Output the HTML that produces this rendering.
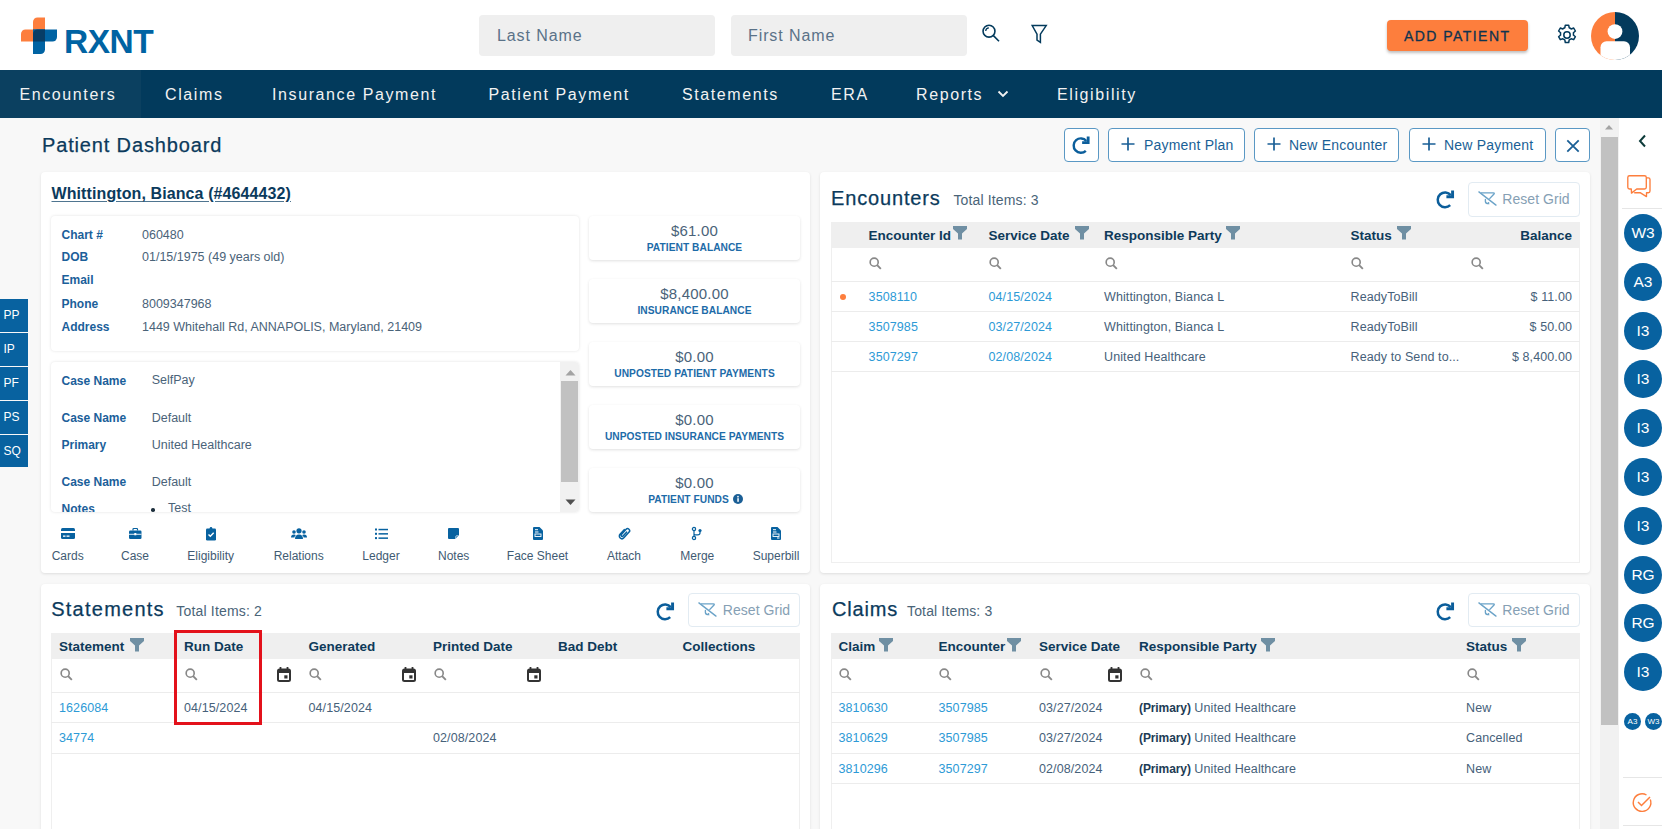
<!DOCTYPE html>
<html><head><meta charset="utf-8">
<style>
*{box-sizing:border-box}
html,body{margin:0;padding:0}
body{width:1662px;height:829px;overflow:hidden;position:relative;background:#f8f8f8;font-family:"Liberation Sans",sans-serif;color:#3f5b73}
.a{position:absolute}
.t{position:absolute;white-space:nowrap;line-height:1}
svg{position:absolute;overflow:visible}
#hdr{left:0;top:0;width:1662px;height:70px;background:#fff}
#nav{left:0;top:70px;width:1662px;height:48px;background:#023a5c}
.nv{color:#f2f2f2;font-size:16px;letter-spacing:1.6px;top:87px}
.inp{background:#efefef;border-radius:4px;height:41px;top:15px;width:236px}
.ph{font-size:16px;color:#5a7288;letter-spacing:0.9px;top:28px}
.card{background:#fff;border-radius:4px;box-shadow:0 1px 3px rgba(0,0,0,0.11)}
.btn{border:1px solid #5a98c4;border-radius:4px;background:#fff;top:128px;height:34px}
.btxt{font-size:14px;color:#1a5f96;top:138px;letter-spacing:0.2px}
.lbl{font-size:12px;font-weight:bold;color:#1b609a}
.val{font-size:12.5px;color:#4a6379}
.bal{left:589px;width:211px;height:44px}
.amt{font-size:15px;color:#4a6379;width:211px;text-align:center;left:0;top:7.5px;letter-spacing:0.2px}
.blab{font-size:10.2px;font-weight:bold;color:#1d6ba8;width:211px;text-align:center;left:0;top:27.2px;letter-spacing:0.05px}
.ttl{font-size:20px;color:#0b3a5c;letter-spacing:0.85px;-webkit-text-stroke:0.25px #0b3a5c}
.tot{font-size:14px;color:#4a6478}
.gh{background:#efefef;height:26px}
.ght{font-size:13.5px;font-weight:bold;color:#0e3a5a}
.cell{font-size:12.5px;color:#46617a;letter-spacing:0.1px}
.lnk{font-size:12.5px;color:#2d9ad6;letter-spacing:0.1px}
.rline{height:1px;background:#ececec}
.rg{border:1px solid #e2ebf2;border-radius:4px;background:#fff;height:34.5px;width:112px}
.rgt{font-size:14px;color:#86a0b4;top:9.3px;left:33.8px;letter-spacing:0.05px}
.ic{font-size:12px;color:#3f5b73;top:549.5px}
.tab{left:0;width:28px;background:#0862a0;color:#fff;font-size:12px}
.circ{width:38px;height:38px;border-radius:50%;background:#0862a0;color:#fff;font-size:15.5px;text-align:center;line-height:38px;left:1624px;margin-top:0.3px}
</style></head><body>

<!-- HEADER -->
<div id="hdr" class="a">
  <!-- logo -->
  <svg style="left:0;top:0" width="160" height="70">
    <path d="M33,41.5 V22 a4.5,4.5 0 0 1 4.5,-4.5 H45 V41.5 Z" fill="#fd7e3d"/>
    <path d="M21,41.5 V34 a4.5,4.5 0 0 1 4.5,-4.5 H45 V41.5 Z" fill="#fd7e3d"/>
    <path d="M33,29.5 H57 V37 a4.5,4.5 0 0 1 -4.5,4.5 H33 Z" fill="#0063a3"/>
    <path d="M33,29.5 H45 V49.5 a4.5,4.5 0 0 1 -4.5,4.5 H33 Z" fill="#0063a3"/>
    <path d="M33,41.5 V34 a4.5,4.5 0 0 1 4.5,-4.5 H45 V41.5 Z" fill="#073d66"/>
  </svg>
  <div class="t" style="left:64px;top:25px;font-size:33.5px;font-weight:bold;color:#0063a3;letter-spacing:-0.5px">RXNT</div>
  <div class="a inp" style="left:479px"></div>
  <div class="t ph" style="left:497px">Last Name</div>
  <div class="a inp" style="left:731px"></div>
  <div class="t ph" style="left:748px">First Name</div>
  <svg style="left:980px;top:23px" width="22" height="22" viewBox="0 0 22 22">
    <circle cx="9" cy="8.2" r="5.95" fill="none" stroke="#033a5c" stroke-width="1.6"/>
    <path d="M5.7,8 A3.3,3.3 0 0 1 8.9,4.9" fill="none" stroke="#033a5c" stroke-width="1.2"/>
    <path d="M13.4,12.6 L19,18.3" stroke="#033a5c" stroke-width="1.6"/>
  </svg>
  <svg style="left:1030px;top:24px" width="20" height="20" viewBox="0 0 20 20">
    <path d="M2.2,1.6 H16.2 L10.4,10.2 V18.3 L7,16 V10.2 Z" fill="none" stroke="#033a5c" stroke-width="1.5" stroke-linejoin="miter"/>
  </svg>
  <div class="a" style="left:1387px;top:20px;width:141px;height:31px;background:#fd7e3d;border-radius:4px;box-shadow:0 2px 3px rgba(0,0,0,0.25)"></div>
  <div class="t" style="left:1404px;top:28.5px;font-size:14px;color:#0e3350;letter-spacing:1.45px;font-weight:normal;-webkit-text-stroke:0.3px #0e3350">ADD PATIENT</div>
  <svg style="left:1554.5px;top:22.5px" width="24" height="24" viewBox="0 0 24 24">
    <path d="M10.3,2.2 h3.4 l0.5,2.6 a7.5,7.5 0 0 1 2,1.15 l2.5,-0.9 l1.7,2.95 l-2,1.7 a7.5,7.5 0 0 1 0,2.3 l2,1.7 l-1.7,2.95 l-2.5,-0.9 a7.5,7.5 0 0 1 -2,1.15 l-0.5,2.6 h-3.4 l-0.5,-2.6 a7.5,7.5 0 0 1 -2,-1.15 l-2.5,0.9 l-1.7,-2.95 l2,-1.7 a7.5,7.5 0 0 1 0,-2.3 l-2,-1.7 l1.7,-2.95 l2.5,0.9 a7.5,7.5 0 0 1 2,-1.15 Z" fill="none" stroke="#033a5c" stroke-width="1.5" stroke-linejoin="round"/>
    <circle cx="12" cy="12" r="3.2" fill="none" stroke="#033a5c" stroke-width="1.5"/>
  </svg>
  <svg style="left:1591px;top:11.5px" width="48" height="48" viewBox="0 0 48 48">
    <defs><clipPath id="av"><circle cx="24" cy="24" r="24"/></clipPath></defs>
    <g clip-path="url(#av)">
      <rect x="0" y="0" width="24" height="48" fill="#fd7e3d"/>
      <rect x="24" y="0" width="24" height="48" fill="#033a5c"/>
      <circle cx="24" cy="19.6" r="7.4" fill="#fff"/>
      <rect x="9.5" y="29.3" width="29.5" height="25" rx="6" fill="#fff"/>
    </g>
  </svg>
</div>

<!-- NAV -->
<div id="nav" class="a">
  <div class="a" style="left:0;top:0;width:140.5px;height:48px;background:#0b4060"></div>
</div>
<div class="t nv" style="left:19.5px">Encounters</div>
<div class="t nv" style="left:165px">Claims</div>
<div class="t nv" style="left:272px">Insurance Payment</div>
<div class="t nv" style="left:488.5px">Patient Payment</div>
<div class="t nv" style="left:682px">Statements</div>
<div class="t nv" style="left:831px">ERA</div>
<div class="t nv" style="left:916px">Reports</div>
<svg style="left:997px;top:90px" width="12" height="8" viewBox="0 0 12 8"><path d="M1.5,1.5 L6,6 L10.5,1.5" fill="none" stroke="#f2f2f2" stroke-width="1.8"/></svg>
<div class="t nv" style="left:1057px">Eligibility</div>

<!-- page title -->
<div class="t" style="left:42px;top:134.5px;font-size:20px;color:#0b3a5c;letter-spacing:0.85px;-webkit-text-stroke:0.25px #0b3a5c">Patient Dashboard</div>

<!-- top buttons -->
<div class="a btn" style="left:1064px;width:35px"></div>
<svg style="left:1072px;top:135.5px" width="19" height="19" viewBox="0 0 18 18">
  <path d="M13.6,4.7 A6.8,6.8 0 1 0 13.1,14.0" fill="none" stroke="#0b5e9b" stroke-width="2.3"/>
  <path d="M9.6,6.3 H15.3 V0.5" fill="none" stroke="#0b5e9b" stroke-width="2.7" stroke-linejoin="miter"/>
</svg>
<div class="a btn" style="left:1108px;width:137px"></div>
<svg style="left:1121px;top:137px" width="14" height="14" viewBox="0 0 14 14"><path d="M7,0.5 V13.5 M0.5,7 H13.5" stroke="#1a5f96" stroke-width="1.7"/></svg>
<div class="t btxt" style="left:1144px">Payment Plan</div>
<div class="a btn" style="left:1254px;width:145px"></div>
<svg style="left:1267px;top:137px" width="14" height="14" viewBox="0 0 14 14"><path d="M7,0.5 V13.5 M0.5,7 H13.5" stroke="#1a5f96" stroke-width="1.7"/></svg>
<div class="t btxt" style="left:1289px">New Encounter</div>
<div class="a btn" style="left:1409px;width:137px"></div>
<svg style="left:1422px;top:137px" width="14" height="14" viewBox="0 0 14 14"><path d="M7,0.5 V13.5 M0.5,7 H13.5" stroke="#1a5f96" stroke-width="1.7"/></svg>
<div class="t btxt" style="left:1444px">New Payment</div>
<div class="a btn" style="left:1555px;width:35px"></div>
<svg style="left:1566px;top:138.5px" width="14" height="14" viewBox="0 0 14 14"><path d="M1.3,1.3 L12.7,12.7 M12.7,1.3 L1.3,12.7" stroke="#1a5f96" stroke-width="1.8"/></svg>

<!-- page scrollbar -->
<div class="a" style="left:1600px;top:118px;width:19px;height:711px;background:#f1f1f1"></div>
<div class="a" style="left:1601px;top:137px;width:17px;height:588px;background:#c1c1c1"></div>
<svg style="left:1604px;top:124px" width="10" height="6" viewBox="0 0 10 6"><path d="M1,5.5 L5,1 L9,5.5 Z" fill="#a3a3a3"/></svg>

<!-- right sidebar -->
<div class="a" style="left:1619px;top:118px;width:43px;height:711px;background:#fff"></div>
<svg style="left:1637px;top:134px" width="10" height="14" viewBox="0 0 10 14"><path d="M8,1.5 L3,7 L8,12.5" fill="none" stroke="#0d3b3a" stroke-width="2"/></svg>
<svg style="left:1626px;top:174px" width="26" height="24" viewBox="0 0 26 24">
  <path d="M5.3,15 H3.5 Q1.8,15 1.8,13.3 V3.5 Q1.8,1.7 3.5,1.7 H18.5 Q20.3,1.7 20.3,3.5 V13.3 Q20.3,15 18.5,15 H10.7 L5.5,19.1 Z" fill="none" stroke="#fd7e3d" stroke-width="1.35" stroke-linejoin="round"/>
  <path d="M20.3,3.9 H22.3 Q24,3.9 24,5.6 V17 Q24,18.7 22.3,18.7 H20.5 V22.6 L14.1,18.7 H8.2" fill="none" stroke="#fd7e3d" stroke-width="1.35" stroke-linejoin="round"/>
</svg>
<div class="a" style="left:1622px;top:208px;width:40px;height:1px;background:#e6e6e6"></div>
<div class="a circ" style="top:213.5px">W3</div>
<div class="a circ" style="top:262.5px">A3</div>
<div class="a circ" style="top:311.5px">I3</div>
<div class="a circ" style="top:360px">I3</div>
<div class="a circ" style="top:409px">I3</div>
<div class="a circ" style="top:458px">I3</div>
<div class="a circ" style="top:506.5px">I3</div>
<div class="a circ" style="top:555.5px">RG</div>
<div class="a circ" style="top:603.5px">RG</div>
<div class="a circ" style="top:653px">I3</div>
<div class="a" style="left:1624px;top:712.5px;width:17px;height:17px;border-radius:50%;background:#0862a0;color:#fff;font-size:8px;text-align:center;line-height:17px">A3</div>
<div class="a" style="left:1645px;top:712.5px;width:17px;height:17px;border-radius:50%;background:#0862a0;color:#fff;font-size:8px;text-align:center;line-height:17px">W3</div>
<div class="a" style="left:1623px;top:777px;width:39px;height:1px;background:#e6e6e6"></div>
<div class="a" style="left:1623px;top:825px;width:39px;height:1px;background:#e6e6e6"></div>
<svg style="left:1632px;top:792px" width="21" height="21" viewBox="0 0 21 21">
  <path d="M18.3,7.5 A8.8,8.8 0 1 1 14.5,3" fill="none" stroke="#fd7e3d" stroke-width="1.4"/>
  <path d="M6,10 L9.5,13.5 L18,5" fill="none" stroke="#fd7e3d" stroke-width="1.5"/>
</svg>

<!-- left tabs -->
<div class="a tab" style="top:298.5px;height:33.5px"><span class="t" style="left:3.5px;top:10px">PP</span></div>
<div class="a tab" style="top:333px;height:32.5px"><span class="t" style="left:3.5px;top:10px">IP</span></div>
<div class="a tab" style="top:366.5px;height:33px"><span class="t" style="left:3.5px;top:10px">PF</span></div>
<div class="a tab" style="top:400.5px;height:33px"><span class="t" style="left:3.5px;top:10px">PS</span></div>
<div class="a tab" style="top:434.5px;height:32.5px"><span class="t" style="left:3.5px;top:10px">SQ</span></div>

<!-- PATIENT CARD -->
<div class="a card" style="left:41px;top:172px;width:769px;height:401px"></div>
<div class="t" style="left:51.5px;top:186px;font-size:16px;font-weight:bold;color:#0b3a5c;letter-spacing:0.1px;text-decoration:underline;text-decoration-color:#4f7590;text-underline-offset:2px">Whittington, Bianca (#4644432)</div>
<div class="a card" style="left:51px;top:216px;width:528px;height:135px;box-shadow:0 0 3px rgba(0,0,0,0.12)"></div>
<div class="t lbl" style="left:61.5px;top:228.5px">Chart #</div><div class="t val" style="left:142px;top:228.6px">060480</div>
<div class="t lbl" style="left:61.5px;top:251px">DOB</div><div class="t val" style="left:142px;top:251.1px">01/15/1975 (49 years old)</div>
<div class="t lbl" style="left:61.5px;top:274.3px">Email</div>
<div class="t lbl" style="left:61.5px;top:297.7px">Phone</div><div class="t val" style="left:142px;top:297.8px">8009347968</div>
<div class="t lbl" style="left:61.5px;top:320.5px">Address</div><div class="t val" style="left:142px;top:320.6px">1449 Whitehall Rd, ANNAPOLIS, Maryland, 21409</div>

<!-- cases -->
<div class="a card" style="left:51px;top:362px;width:528px;height:150px;overflow:hidden;box-shadow:0 0 3px rgba(0,0,0,0.12)">
  <div class="t lbl" style="left:10.5px;top:12.8px">Case Name</div><div class="t val" style="left:100.7px;top:12.3px">SelfPay</div>
  <div class="t lbl" style="left:10.5px;top:50.1px">Case Name</div><div class="t val" style="left:100.7px;top:49.6px">Default</div>
  <div class="t lbl" style="left:10.5px;top:77.3px">Primary</div><div class="t val" style="left:100.7px;top:76.8px">United Healthcare</div>
  <div class="t lbl" style="left:10.5px;top:114.3px">Case Name</div><div class="t val" style="left:100.7px;top:113.8px">Default</div>
  <div class="t lbl" style="left:10.5px;top:140.9px">Notes</div><div class="a" style="left:100px;top:146px;width:3.5px;height:3.5px;border-radius:50%;background:#1d2f3d"></div><div class="t val" style="left:117px;top:140.4px">Test</div>
  <div class="a" style="left:509px;top:0;width:19px;height:150px;background:#f1f1f1"></div>
  <div class="a" style="left:510px;top:18.5px;width:17px;height:101.5px;background:#c1c1c1"></div>
  <svg style="left:513.5px;top:6.5px" width="11" height="7" viewBox="0 0 11 7"><path d="M0.5,6.5 L5.5,1 L10.5,6.5 Z" fill="#a3a3a3"/></svg>
  <svg style="left:513.5px;top:136.5px" width="11" height="7" viewBox="0 0 11 7"><path d="M0.5,0.5 L5.5,6 L10.5,0.5 Z" fill="#505050"/></svg>
</div>

<!-- balance cards -->
<div class="a card bal" style="top:215.5px;box-shadow:0 1px 3px rgba(0,0,0,0.12)"><div class="t amt">$61.00</div><div class="t blab">PATIENT BALANCE</div></div>
<div class="a card bal" style="top:278.5px;box-shadow:0 1px 3px rgba(0,0,0,0.12)"><div class="t amt">$8,400.00</div><div class="t blab">INSURANCE BALANCE</div></div>
<div class="a card bal" style="top:341.5px;box-shadow:0 1px 3px rgba(0,0,0,0.12)"><div class="t amt">$0.00</div><div class="t blab">UNPOSTED PATIENT PAYMENTS</div></div>
<div class="a card bal" style="top:404.5px;box-shadow:0 1px 3px rgba(0,0,0,0.12)"><div class="t amt">$0.00</div><div class="t blab">UNPOSTED INSURANCE PAYMENTS</div></div>
<div class="a card bal" style="top:467.5px;box-shadow:0 1px 3px rgba(0,0,0,0.12)"><div class="t amt">$0.00</div><div class="t blab" style="left:-6px">PATIENT FUNDS</div>
  <svg style="left:144px;top:26.5px" width="10" height="10" viewBox="0 0 10 10"><circle cx="5" cy="5" r="5" fill="#1b5f96"/><rect x="4.3" y="4.2" width="1.5" height="3.6" fill="#fff"/><circle cx="5" cy="2.7" r="0.85" fill="#fff"/></svg>
</div>

<!-- icon row -->
<svg style="left:60.7px;top:527.8px" width="14" height="11" viewBox="0 0 14 11"><rect x="0" y="0" width="14" height="11" rx="1.5" fill="#0862a0"/><rect x="0" y="3" width="14" height="2" fill="#fff"/><rect x="2" y="7.5" width="2.5" height="1.3" fill="#fff"/><rect x="5.5" y="7.5" width="3" height="1.3" fill="#fff"/></svg>
<div class="t ic" style="left:17.7px;width:100px;text-align:center">Cards</div>
<svg style="left:128.8px;top:527.8px" width="12.5" height="11" viewBox="0 0 12.5 11"><path d="M4,2.5 V1.2 Q4,0.5 4.7,0.5 H7.8 Q8.5,0.5 8.5,1.2 V2.5" fill="none" stroke="#0862a0" stroke-width="1.2"/><rect x="0" y="2.5" width="12.5" height="8.5" rx="1.2" fill="#0862a0"/><rect x="0" y="5.8" width="12.5" height="0.9" fill="#fff"/><rect x="5.3" y="5" width="2" height="2.3" fill="#fff"/></svg>
<div class="t ic" style="left:85.0px;width:100px;text-align:center">Case</div>
<svg style="left:205.7px;top:526.5px" width="10" height="13.5" viewBox="0 0 10 13.5"><rect x="0" y="1.5" width="10" height="12" rx="1.2" fill="#0862a0"/><circle cx="5" cy="1.3" r="1.3" fill="#0862a0"/><path d="M2.5,7.5 L4.3,9.3 L7.7,5.7" fill="none" stroke="#fff" stroke-width="1.4"/></svg>
<div class="t ic" style="left:160.7px;width:100px;text-align:center">Eligibility</div>
<svg style="left:290.7px;top:527.8px" width="16" height="11" viewBox="0 0 16 11"><circle cx="8" cy="2.8" r="2.6" fill="#0862a0"/><circle cx="3" cy="4" r="1.8" fill="#0862a0"/><circle cx="13" cy="4" r="1.8" fill="#0862a0"/><path d="M4,11 Q4,6.5 8,6.5 Q12,6.5 12,11 Z" fill="#0862a0"/><path d="M0,9.5 Q0,6.5 3,6.5 Q4.5,6.5 4.8,7.2 Q3.5,8.3 3.4,9.5 Z" fill="#0862a0"/><path d="M16,9.5 Q16,6.5 13,6.5 Q11.5,6.5 11.2,7.2 Q12.5,8.3 12.6,9.5 Z" fill="#0862a0"/></svg>
<div class="t ic" style="left:248.7px;width:100px;text-align:center">Relations</div>
<svg style="left:374.5px;top:527.5px" width="13" height="11.5" viewBox="0 0 13 11.5"><rect x="0" y="0.5" width="2" height="2" fill="#0862a0"/><rect x="0" y="4.8" width="2" height="2" fill="#0862a0"/><rect x="0" y="9.1" width="2" height="2" fill="#0862a0"/><rect x="3.5" y="0.8" width="9.5" height="1.5" fill="#0862a0"/><rect x="3.5" y="5.1" width="9.5" height="1.5" fill="#0862a0"/><rect x="3.5" y="9.4" width="9.5" height="1.5" fill="#0862a0"/></svg>
<div class="t ic" style="left:331.0px;width:100px;text-align:center">Ledger</div>
<svg style="left:448.2px;top:527.8px" width="11" height="11" viewBox="0 0 11 11"><path d="M0,1 Q0,0 1,0 H10 Q11,0 11,1 V7.3 L7.3,11 H1 Q0,11 0,10 Z" fill="#0862a0"/><path d="M7.8,11 V8.5 Q7.8,7.8 8.5,7.8 H11" fill="none" stroke="#fff" stroke-width="0.7"/></svg>
<div class="t ic" style="left:403.7px;width:100px;text-align:center">Notes</div>
<svg style="left:532.5px;top:526.8px" width="10" height="13" viewBox="0 0 10 13"><path d="M0,1 Q0,0 1,0 H6.5 L10,3.5 V12 Q10,13 9,13 H1 Q0,13 0,12 Z" fill="#0862a0"/><rect x="2" y="2.2" width="3" height="1" fill="#fff"/><rect x="2" y="4.5" width="3.5" height="1" fill="#fff"/><rect x="2" y="7" width="6" height="2.5" fill="none" stroke="#fff" stroke-width="0.9"/></svg>
<div class="t ic" style="left:487.5px;width:100px;text-align:center">Face Sheet</div>
<svg style="left:618.0px;top:526.8px" width="12" height="13" viewBox="0 0 12 13"><g transform="translate(6,6.5) rotate(42) translate(-3.2,-7.5)"><path d="M0.8,4.5 V10.8 A2.6,2.6 0 0 0 6,10.8 V3 A2,2 0 0 0 2,3 V10 A1.1,1.1 0 0 0 4.2,10 V4.8" fill="none" stroke="#0862a0" stroke-width="1.5" stroke-linecap="round"/></g></svg>
<div class="t ic" style="left:574.0px;width:100px;text-align:center">Attach</div>
<svg style="left:692.3px;top:526.8px" width="10" height="13" viewBox="0 0 10 13"><circle cx="2" cy="2" r="1.6" fill="none" stroke="#0862a0" stroke-width="1.3"/><circle cx="2" cy="11" r="1.6" fill="none" stroke="#0862a0" stroke-width="1.3"/><circle cx="8" cy="3.6" r="1.6" fill="#0862a0"/><path d="M2,3.6 V9.4 M8,5 V6 Q8,7.8 5.8,7.8 H2.6 Q2,7.8 2,8.5" fill="none" stroke="#0862a0" stroke-width="1.2"/></svg>
<div class="t ic" style="left:647.3px;width:100px;text-align:center">Merge</div>
<svg style="left:771.0px;top:526.8px" width="10" height="13" viewBox="0 0 10 13"><path d="M0,1 Q0,0 1,0 H6.5 L10,3.5 V12 Q10,13 9,13 H1 Q0,13 0,12 Z" fill="#0862a0"/><rect x="2" y="2.2" width="3" height="1" fill="#fff"/><rect x="2" y="4.5" width="3.5" height="1" fill="#fff"/><rect x="2" y="7" width="6" height="2.5" fill="none" stroke="#fff" stroke-width="0.9"/><rect x="6" y="10.5" width="2.5" height="1" fill="#fff"/></svg>
<div class="t ic" style="left:726.0px;width:100px;text-align:center">Superbill</div>

<!-- ENCOUNTERS CARD -->
<div class="a card" style="left:820px;top:172px;width:770px;height:401px"></div>
<div class="t ttl" style="left:831px;top:187.5px">Encounters</div>
<div class="t tot" style="left:953.4px;top:192.5px;letter-spacing:0.15px">Total Items: 3</div>
<svg style="left:1435.5px;top:190.2px" width="19.5" height="19.5" viewBox="0 0 18 18"><path d="M13.6,4.7 A6.8,6.8 0 1 0 13.1,14.0" fill="none" stroke="#0b5e9b" stroke-width="2.3"/><path d="M9.6,6.3 H15.3 V0.5" fill="none" stroke="#0b5e9b" stroke-width="2.7" stroke-linejoin="miter"/></svg>
<div class="a rg" style="left:1467.5px;top:182px"><svg style="left:9px;top:8.3px" width="19" height="15" viewBox="0 0 19 15"><path d="M3,1.9 H15.4 Q16.8,1.9 16,3 L11.4,7.9" fill="none" stroke="#6ba3c8" stroke-width="1.35"/><path d="M0.9,0.9 L18,14.1" stroke="#6ba3c8" stroke-width="1.35" stroke-linecap="round"/><path d="M7.4,8.4 V10.6 Q7.6,12.6 10.6,12.7 V11.6" fill="none" stroke="#6ba3c8" stroke-width="1.35" stroke-linecap="round"/></svg><div class="t rgt">Reset Grid</div></div>
<div class="a gh" style="left:830.5px;top:221.5px;width:749.5px"></div>
<div class="a" style="left:830.5px;top:247.5px;width:749.5px;height:315px;border:1px solid #efefef;border-top:none"></div>
<div class="a rline" style="left:830.5px;top:281px;width:749.5px"></div>
<div class="a rline" style="left:830.5px;top:311px;width:749.5px"></div>
<div class="a rline" style="left:830.5px;top:341px;width:749.5px"></div>
<div class="a rline" style="left:830.5px;top:371px;width:749.5px"></div>
<div class="t ght" style="left:868.6px;top:228.5px">Encounter Id</div>
<svg style="left:953px;top:226.2px" width="14" height="14" viewBox="0 0 14 14"><path d="M0,0 H14 V3 L9,7.5 V13.5 H5 V7.5 L0,3 Z" fill="#6f8fa3"/></svg>
<div class="t ght" style="left:988.5px;top:228.5px">Service Date</div>
<svg style="left:1074.5px;top:226.2px" width="14" height="14" viewBox="0 0 14 14"><path d="M0,0 H14 V3 L9,7.5 V13.5 H5 V7.5 L0,3 Z" fill="#6f8fa3"/></svg>
<div class="t ght" style="left:1104px;top:228.5px">Responsible Party</div>
<svg style="left:1226px;top:226.2px" width="14" height="14" viewBox="0 0 14 14"><path d="M0,0 H14 V3 L9,7.5 V13.5 H5 V7.5 L0,3 Z" fill="#6f8fa3"/></svg>
<div class="t ght" style="left:1350.5px;top:228.5px">Status</div>
<svg style="left:1397px;top:226.2px" width="14" height="14" viewBox="0 0 14 14"><path d="M0,0 H14 V3 L9,7.5 V13.5 H5 V7.5 L0,3 Z" fill="#6f8fa3"/></svg>
<div class="t ght" style="left:1480px;width:92px;text-align:right;top:228.5px">Balance</div>
<svg style="left:868.8px;top:256.8px" width="12.7" height="12.7" viewBox="0 0 12 12"><circle cx="4.9" cy="4.9" r="3.8" fill="none" stroke="#888" stroke-width="1.55"/><path d="M7.7,7.7 L11.2,11.2" stroke="#888" stroke-width="1.8"/></svg>
<svg style="left:988.8px;top:256.8px" width="12.7" height="12.7" viewBox="0 0 12 12"><circle cx="4.9" cy="4.9" r="3.8" fill="none" stroke="#888" stroke-width="1.55"/><path d="M7.7,7.7 L11.2,11.2" stroke="#888" stroke-width="1.8"/></svg>
<svg style="left:1104.8px;top:256.8px" width="12.7" height="12.7" viewBox="0 0 12 12"><circle cx="4.9" cy="4.9" r="3.8" fill="none" stroke="#888" stroke-width="1.55"/><path d="M7.7,7.7 L11.2,11.2" stroke="#888" stroke-width="1.8"/></svg>
<svg style="left:1350.8px;top:256.8px" width="12.7" height="12.7" viewBox="0 0 12 12"><circle cx="4.9" cy="4.9" r="3.8" fill="none" stroke="#888" stroke-width="1.55"/><path d="M7.7,7.7 L11.2,11.2" stroke="#888" stroke-width="1.8"/></svg>
<svg style="left:1470.8px;top:256.8px" width="12.7" height="12.7" viewBox="0 0 12 12"><circle cx="4.9" cy="4.9" r="3.8" fill="none" stroke="#888" stroke-width="1.55"/><path d="M7.7,7.7 L11.2,11.2" stroke="#888" stroke-width="1.8"/></svg>
<div class="a" style="left:840px;top:294.1px;width:6px;height:6px;border-radius:50%;background:#fd7e3d"></div>
<div class="t lnk" style="left:868.6px;top:291.0px">3508110</div>
<div class="t lnk" style="left:988.5px;top:291.0px">04/15/2024</div>
<div class="t cell" style="left:1104px;top:291.0px">Whittington, Bianca L</div>
<div class="t cell" style="left:1350.5px;top:291.0px">ReadyToBill</div>
<div class="t cell" style="left:1472px;width:100px;text-align:right;top:291.0px">$ 11.00</div>
<div class="t lnk" style="left:868.6px;top:321.1px">3507985</div>
<div class="t lnk" style="left:988.5px;top:321.1px">03/27/2024</div>
<div class="t cell" style="left:1104px;top:321.1px">Whittington, Bianca L</div>
<div class="t cell" style="left:1350.5px;top:321.1px">ReadyToBill</div>
<div class="t cell" style="left:1472px;width:100px;text-align:right;top:321.1px">$ 50.00</div>
<div class="t lnk" style="left:868.6px;top:351.2px">3507297</div>
<div class="t lnk" style="left:988.5px;top:351.2px">02/08/2024</div>
<div class="t cell" style="left:1104px;top:351.2px">United Healthcare</div>
<div class="t cell" style="left:1350.5px;top:351.2px">Ready to Send to...</div>
<div class="t cell" style="left:1472px;width:100px;text-align:right;top:351.2px">$ 8,400.00</div>

<!-- STATEMENTS CARD -->
<div class="a card" style="left:41px;top:583.5px;width:769px;height:260px"></div>
<div class="t ttl" style="left:51.2px;top:598.7px;letter-spacing:1.25px">Statements</div>
<div class="t tot" style="left:176.3px;top:603.7px;letter-spacing:0.18px">Total Items: 2</div>
<svg style="left:656.0px;top:601.7px" width="19.5" height="19.5" viewBox="0 0 18 18"><path d="M13.6,4.7 A6.8,6.8 0 1 0 13.1,14.0" fill="none" stroke="#0b5e9b" stroke-width="2.3"/><path d="M9.6,6.3 H15.3 V0.5" fill="none" stroke="#0b5e9b" stroke-width="2.7" stroke-linejoin="miter"/></svg>
<div class="a rg" style="left:688px;top:592.8px"><svg style="left:9px;top:8.3px" width="19" height="15" viewBox="0 0 19 15"><path d="M3,1.9 H15.4 Q16.8,1.9 16,3 L11.4,7.9" fill="none" stroke="#6ba3c8" stroke-width="1.35"/><path d="M0.9,0.9 L18,14.1" stroke="#6ba3c8" stroke-width="1.35" stroke-linecap="round"/><path d="M7.4,8.4 V10.6 Q7.6,12.6 10.6,12.7 V11.6" fill="none" stroke="#6ba3c8" stroke-width="1.35" stroke-linecap="round"/></svg><div class="t rgt">Reset Grid</div></div>
<div class="a gh" style="left:51px;top:633px;width:749px"></div>
<div class="a" style="left:51px;top:659px;width:749px;height:200px;border:1px solid #efefef;border-top:none"></div>
<div class="a rline" style="left:51px;top:692px;width:749px"></div>
<div class="a rline" style="left:51px;top:722px;width:749px"></div>
<div class="a rline" style="left:51px;top:752.5px;width:749px"></div>
<div class="t ght" style="left:59px;top:639.5px">Statement</div>
<svg style="left:130px;top:637.5px" width="14" height="14" viewBox="0 0 14 14"><path d="M0,0 H14 V3 L9,7.5 V13.5 H5 V7.5 L0,3 Z" fill="#6f8fa3"/></svg>
<div class="t ght" style="left:184px;top:639.5px">Run Date</div>
<div class="t ght" style="left:308.5px;top:639.5px">Generated</div>
<div class="t ght" style="left:433px;top:639.5px">Printed Date</div>
<div class="t ght" style="left:558px;top:639.5px">Bad Debt</div>
<div class="t ght" style="left:682.5px;top:639.5px">Collections</div>
<svg style="left:59.8px;top:668.3px" width="12.7" height="12.7" viewBox="0 0 12 12"><circle cx="4.9" cy="4.9" r="3.8" fill="none" stroke="#888" stroke-width="1.55"/><path d="M7.7,7.7 L11.2,11.2" stroke="#888" stroke-width="1.8"/></svg>
<svg style="left:184.8px;top:668.3px" width="12.7" height="12.7" viewBox="0 0 12 12"><circle cx="4.9" cy="4.9" r="3.8" fill="none" stroke="#888" stroke-width="1.55"/><path d="M7.7,7.7 L11.2,11.2" stroke="#888" stroke-width="1.8"/></svg>
<svg style="left:309.3px;top:668.3px" width="12.7" height="12.7" viewBox="0 0 12 12"><circle cx="4.9" cy="4.9" r="3.8" fill="none" stroke="#888" stroke-width="1.55"/><path d="M7.7,7.7 L11.2,11.2" stroke="#888" stroke-width="1.8"/></svg>
<svg style="left:433.8px;top:668.3px" width="12.7" height="12.7" viewBox="0 0 12 12"><circle cx="4.9" cy="4.9" r="3.8" fill="none" stroke="#888" stroke-width="1.55"/><path d="M7.7,7.7 L11.2,11.2" stroke="#888" stroke-width="1.8"/></svg>
<svg style="left:277px;top:667px" width="14" height="15" viewBox="0 0 14 15"><path d="M3.5,0 V3 M10.5,0 V3" stroke="#333" stroke-width="1.8"/><rect x="1" y="2.5" width="12" height="11.5" rx="1.5" fill="none" stroke="#333" stroke-width="2"/><rect x="1" y="2.5" width="12" height="3.5" fill="#333"/><rect x="7.3" y="8.3" width="3.2" height="3.2" fill="#333"/></svg>
<svg style="left:402px;top:667px" width="14" height="15" viewBox="0 0 14 15"><path d="M3.5,0 V3 M10.5,0 V3" stroke="#333" stroke-width="1.8"/><rect x="1" y="2.5" width="12" height="11.5" rx="1.5" fill="none" stroke="#333" stroke-width="2"/><rect x="1" y="2.5" width="12" height="3.5" fill="#333"/><rect x="7.3" y="8.3" width="3.2" height="3.2" fill="#333"/></svg>
<svg style="left:526.5px;top:667px" width="14" height="15" viewBox="0 0 14 15"><path d="M3.5,0 V3 M10.5,0 V3" stroke="#333" stroke-width="1.8"/><rect x="1" y="2.5" width="12" height="11.5" rx="1.5" fill="none" stroke="#333" stroke-width="2"/><rect x="1" y="2.5" width="12" height="3.5" fill="#333"/><rect x="7.3" y="8.3" width="3.2" height="3.2" fill="#333"/></svg>
<div class="t lnk" style="left:59px;top:701.9px">1626084</div>
<div class="t cell" style="left:184px;top:701.9px">04/15/2024</div>
<div class="t cell" style="left:308.5px;top:701.9px">04/15/2024</div>
<div class="t lnk" style="left:59px;top:732.4px">34774</div>
<div class="t cell" style="left:433px;top:732.4px">02/08/2024</div>
<div class="a" style="left:174px;top:630px;width:88px;height:95px;border:3.3px solid #e3111b"></div>

<!-- CLAIMS CARD -->
<div class="a card" style="left:820px;top:583.5px;width:770px;height:260px"></div>
<div class="t ttl" style="left:832px;top:598.7px">Claims</div>
<div class="t tot" style="left:907px;top:603.7px;letter-spacing:0.15px">Total Items: 3</div>
<svg style="left:1435.5px;top:601.7px" width="19.5" height="19.5" viewBox="0 0 18 18"><path d="M13.6,4.7 A6.8,6.8 0 1 0 13.1,14.0" fill="none" stroke="#0b5e9b" stroke-width="2.3"/><path d="M9.6,6.3 H15.3 V0.5" fill="none" stroke="#0b5e9b" stroke-width="2.7" stroke-linejoin="miter"/></svg>
<div class="a rg" style="left:1467.5px;top:592.8px"><svg style="left:9px;top:8.3px" width="19" height="15" viewBox="0 0 19 15"><path d="M3,1.9 H15.4 Q16.8,1.9 16,3 L11.4,7.9" fill="none" stroke="#6ba3c8" stroke-width="1.35"/><path d="M0.9,0.9 L18,14.1" stroke="#6ba3c8" stroke-width="1.35" stroke-linecap="round"/><path d="M7.4,8.4 V10.6 Q7.6,12.6 10.6,12.7 V11.6" fill="none" stroke="#6ba3c8" stroke-width="1.35" stroke-linecap="round"/></svg><div class="t rgt">Reset Grid</div></div>
<div class="a gh" style="left:830.5px;top:633px;width:749.5px"></div>
<div class="a" style="left:830.5px;top:659px;width:749.5px;height:200px;border:1px solid #efefef;border-top:none"></div>
<div class="a rline" style="left:830.5px;top:692px;width:749.5px"></div>
<div class="a rline" style="left:830.5px;top:722px;width:749.5px"></div>
<div class="a rline" style="left:830.5px;top:752.5px;width:749.5px"></div>
<div class="a rline" style="left:830.5px;top:782.5px;width:749.5px"></div>
<div class="t ght" style="left:838.5px;top:639.5px">Claim</div>
<svg style="left:878.5px;top:637.5px" width="14" height="14" viewBox="0 0 14 14"><path d="M0,0 H14 V3 L9,7.5 V13.5 H5 V7.5 L0,3 Z" fill="#6f8fa3"/></svg>
<div class="t ght" style="left:938.5px;top:639.5px">Encounter</div>
<svg style="left:1006.5px;top:637.5px" width="14" height="14" viewBox="0 0 14 14"><path d="M0,0 H14 V3 L9,7.5 V13.5 H5 V7.5 L0,3 Z" fill="#6f8fa3"/></svg>
<div class="t ght" style="left:1039px;top:639.5px">Service Date</div>
<div class="t ght" style="left:1139px;top:639.5px">Responsible Party</div>
<svg style="left:1261px;top:637.5px" width="14" height="14" viewBox="0 0 14 14"><path d="M0,0 H14 V3 L9,7.5 V13.5 H5 V7.5 L0,3 Z" fill="#6f8fa3"/></svg>
<div class="t ght" style="left:1466px;top:639.5px">Status</div>
<svg style="left:1512px;top:637.5px" width="14" height="14" viewBox="0 0 14 14"><path d="M0,0 H14 V3 L9,7.5 V13.5 H5 V7.5 L0,3 Z" fill="#6f8fa3"/></svg>
<svg style="left:839.3px;top:668.3px" width="12.7" height="12.7" viewBox="0 0 12 12"><circle cx="4.9" cy="4.9" r="3.8" fill="none" stroke="#888" stroke-width="1.55"/><path d="M7.7,7.7 L11.2,11.2" stroke="#888" stroke-width="1.8"/></svg>
<svg style="left:939.3px;top:668.3px" width="12.7" height="12.7" viewBox="0 0 12 12"><circle cx="4.9" cy="4.9" r="3.8" fill="none" stroke="#888" stroke-width="1.55"/><path d="M7.7,7.7 L11.2,11.2" stroke="#888" stroke-width="1.8"/></svg>
<svg style="left:1039.8px;top:668.3px" width="12.7" height="12.7" viewBox="0 0 12 12"><circle cx="4.9" cy="4.9" r="3.8" fill="none" stroke="#888" stroke-width="1.55"/><path d="M7.7,7.7 L11.2,11.2" stroke="#888" stroke-width="1.8"/></svg>
<svg style="left:1139.8px;top:668.3px" width="12.7" height="12.7" viewBox="0 0 12 12"><circle cx="4.9" cy="4.9" r="3.8" fill="none" stroke="#888" stroke-width="1.55"/><path d="M7.7,7.7 L11.2,11.2" stroke="#888" stroke-width="1.8"/></svg>
<svg style="left:1466.8px;top:668.3px" width="12.7" height="12.7" viewBox="0 0 12 12"><circle cx="4.9" cy="4.9" r="3.8" fill="none" stroke="#888" stroke-width="1.55"/><path d="M7.7,7.7 L11.2,11.2" stroke="#888" stroke-width="1.8"/></svg>
<svg style="left:1108px;top:667px" width="14" height="15" viewBox="0 0 14 15"><path d="M3.5,0 V3 M10.5,0 V3" stroke="#333" stroke-width="1.8"/><rect x="1" y="2.5" width="12" height="11.5" rx="1.5" fill="none" stroke="#333" stroke-width="2"/><rect x="1" y="2.5" width="12" height="3.5" fill="#333"/><rect x="7.3" y="8.3" width="3.2" height="3.2" fill="#333"/></svg>
<div class="t lnk" style="left:838.5px;top:701.9px">3810630</div>
<div class="t lnk" style="left:938.5px;top:701.9px">3507985</div>
<div class="t cell" style="left:1039px;top:701.9px">03/27/2024</div>
<div class="t cell" style="left:1139px;top:701.9px"><b style="color:#1d3c55;font-size:12px;letter-spacing:-0.1px">(Primary)</b> United Healthcare</div>
<div class="t cell" style="left:1466px;top:701.9px">New</div>
<div class="t lnk" style="left:838.5px;top:732.4px">3810629</div>
<div class="t lnk" style="left:938.5px;top:732.4px">3507985</div>
<div class="t cell" style="left:1039px;top:732.4px">03/27/2024</div>
<div class="t cell" style="left:1139px;top:732.4px"><b style="color:#1d3c55;font-size:12px;letter-spacing:-0.1px">(Primary)</b> United Healthcare</div>
<div class="t cell" style="left:1466px;top:732.4px">Cancelled</div>
<div class="t lnk" style="left:838.5px;top:762.9px">3810296</div>
<div class="t lnk" style="left:938.5px;top:762.9px">3507297</div>
<div class="t cell" style="left:1039px;top:762.9px">02/08/2024</div>
<div class="t cell" style="left:1139px;top:762.9px"><b style="color:#1d3c55;font-size:12px;letter-spacing:-0.1px">(Primary)</b> United Healthcare</div>
<div class="t cell" style="left:1466px;top:762.9px">New</div>

</body></html>
